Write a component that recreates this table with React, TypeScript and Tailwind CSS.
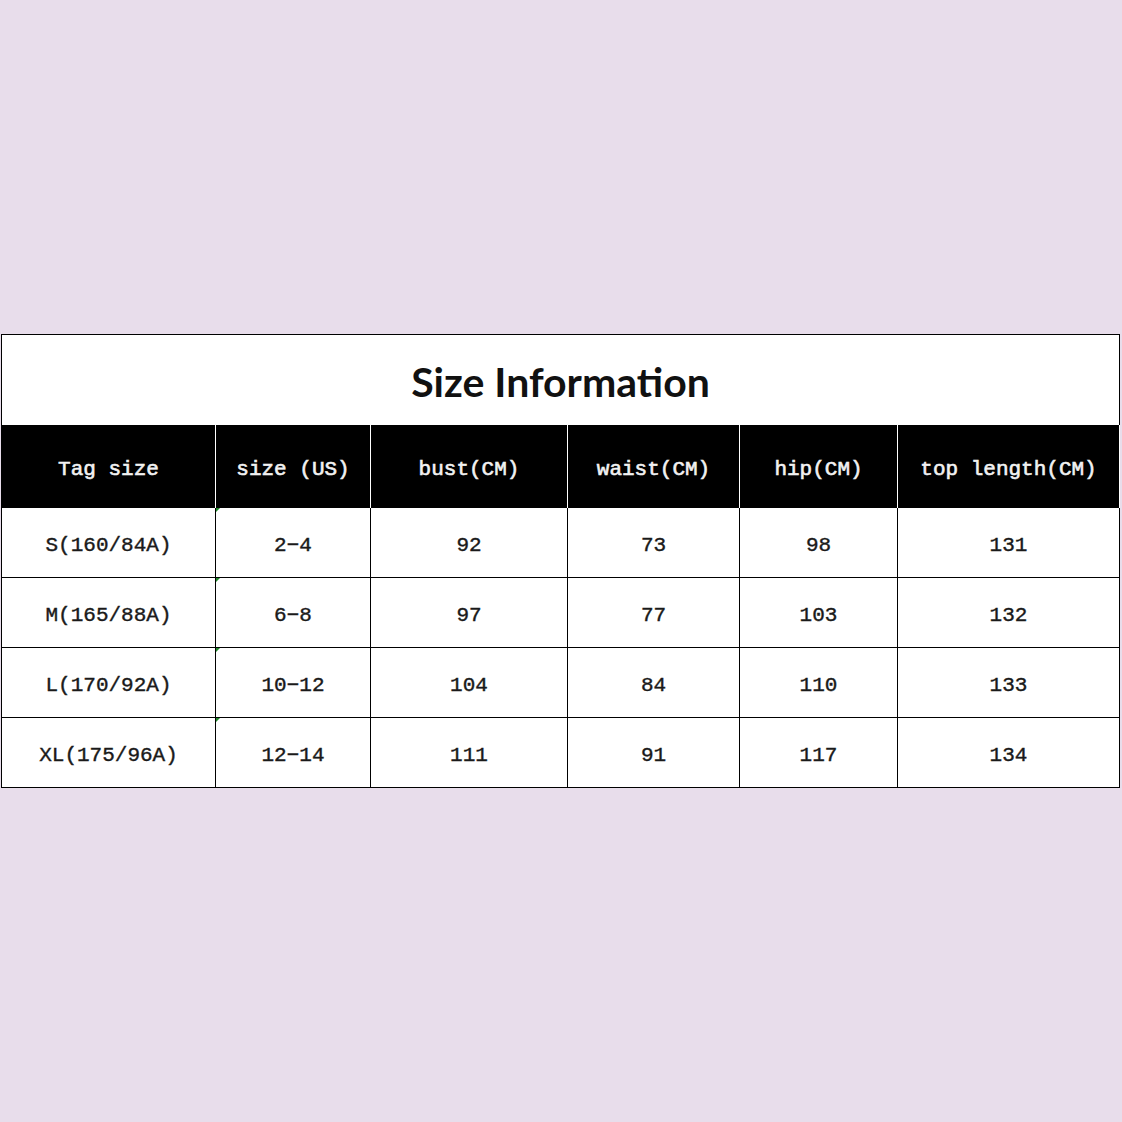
const cols = ["w-[214px]", "w-[155px]", "w-[197px]", "w-[172px]", "w-[158px]", "w-[222px]"];

const headers = ["Tag size", "size (US)", "bust(CM)", "waist(CM)", "hip(CM)", "top length(CM)"];

const rows = [
  ["S(160/84A)", "2−4", "92", "73", "98", "131"],
  ["M(165/88A)", "6−8", "97", "77", "103", "132"],
  ["L(170/92A)", "10−12", "104", "84", "110", "133"],
  ["XL(175/96A)", "12−14", "111", "91", "117", "134"],
];

export default function App() {
  return (
    <div className="min-h-[1122px] w-[1122px] bg-[#e8ddeb] pt-[334px]">
      <div className="ml-px w-[1119px] border-l border-black bg-white">
        {/* title */}
        <div className="flex h-[91px] items-center justify-center border-r border-t border-black bg-white">
          <h1 className="pt-[4px] text-[41px] font-bold text-[#111]" style={{ fontFamily: "Lato, 'Open Sans', sans-serif" }}>
            Size Information
          </h1>
        </div>

        {/* header */}
        <div className="flex h-[83px] bg-black" style={{ fontFamily: "'Liberation Mono', monospace" }}>
          {headers.map((h, i) => (
            <div
              key={h}
              className={`${cols[i]} flex items-center justify-center whitespace-pre border-r border-white pt-[6px] text-[21px] text-[#f2f2f2] [-webkit-text-stroke:0.6px_#f2f2f2]`}
            >
              {h}
            </div>
          ))}
        </div>

        {/* body */}
        {rows.map((r) => (
          <div key={r[0]} className="flex h-[70px] border-b border-black" style={{ fontFamily: "'Liberation Mono', monospace" }}>
            {r.map((c, i) => (
              <div
                key={i}
                className={`${cols[i]} relative flex items-center justify-center border-r border-black pt-[6px] text-[21px] text-[#1a1a1a] [-webkit-text-stroke:0.4px_#1a1a1a]`}
              >
                {i === 1 && (
                  <span className="absolute left-0 top-0 h-0 w-0 border-r-[4px] border-t-[4px] border-r-transparent border-t-[#1f8a2a]" />
                )}
                {c}
              </div>
            ))}
          </div>
        ))}
      </div>
    </div>
  );
}
